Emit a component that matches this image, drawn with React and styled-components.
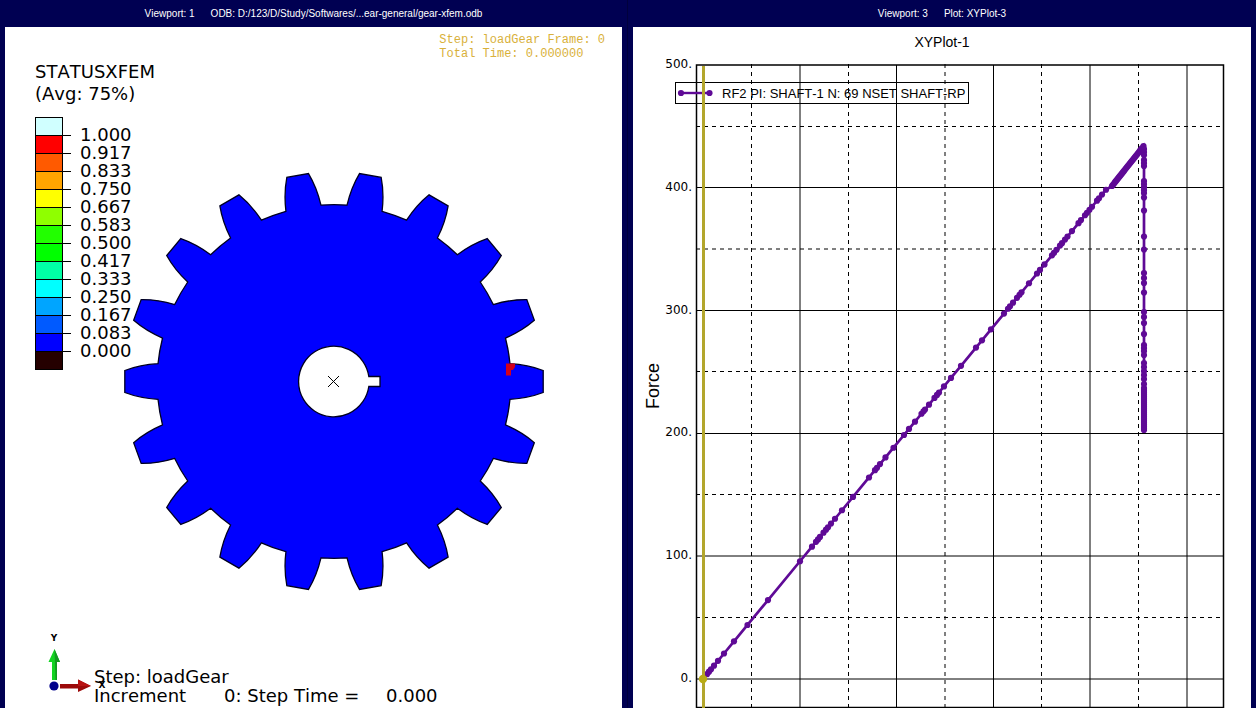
import React from "react"
import styled, { createGlobalStyle } from "styled-components"

const GlobalStyle = createGlobalStyle`
  body {
    margin: 0;
    background: #00003c;
    font-family: "DejaVu Sans", Verdana, sans-serif;
    font-kerning: none;
    color: #000;
  }
`

const Workspace = styled.main`
  display: grid;
  grid-template-columns: 627fr 628fr;
  gap: 1px;
`

const Viewport = styled.section`
  background: #000052;
  padding: 0 5px;
`

const TitleBar = styled.header`
  display: flex;
  justify-content: center;
  align-items: center;
  gap: 16px;
  height: 27px;
  color: #fff;
  font-family: "Liberation Sans", Arial, sans-serif;
  font-size: 10px;
  white-space: nowrap;
`

const Canvas = styled.div`
  display: grid;
  background: #fff;

  > * {
    grid-area: 1 / 1;
  }
`

const Drawing = styled.svg`
  display: block;
  width: 100%;
  height: auto;
`

const Overlay = styled.div`
  display: flex;
  flex-direction: column;
  justify-content: space-between;
  padding-bottom: 3px;
`

const TopRow = styled.div`
  display: flex;
  justify-content: space-between;
  align-items: flex-start;
  padding: 6px 17px 0 30px;
`

const Legend = styled.div`
  display: flex;
  flex-direction: column;
  gap: 12px;
  padding-top: 28px;
  font-size: 18px;
`

const LegendTitle = styled.div`
  line-height: 22px;
`

const Scale = styled.div`
  display: flex;
  align-items: flex-start;
`

const Swatches = styled.div`
  width: 26px;
  border: 1px solid #000;
  border-bottom: 0;
`

const Swatch = styled.div`
  height: 17px;
  background: ${props => props.$color};
  border-bottom: 1px solid #000;
`

const Ticks = styled.div`
  width: 8px;
  padding-top: 1px;
`

const Tick = styled.div`
  height: 17px;
  border-bottom: 1px solid #000;
`

const Values = styled.ul`
  list-style: none;
  margin: 0;
  padding: 9px 0 0 9px;
  line-height: 18px;
`

const FrameInfo = styled.div`
  color: #d9b13b;
  font-family: "Liberation Mono", "Courier New", monospace;
  font-size: 12px;
  line-height: 14px;
`

const StepInfo = styled.div`
  padding-left: 89px;
  font-size: 18px;
  line-height: 19px;
  white-space: nowrap;
`

const IncrementRow = styled.div`
  display: grid;
  grid-template-columns: 130px 162px auto;
`

const PlotText = styled.text`
  font-family: "Liberation Sans", Arial, sans-serif;
  font-size: ${props => props.$size}px;
`

const AxisValue = styled.text`
  font-size: 12px;
  text-anchor: end;
`

const TriadLabel = styled.text`
  font-size: 9px;
  font-weight: bold;
  text-anchor: middle;
`

const colors = [
  "#d0ffff", "#ff0000", "#ff5a00", "#ffa500", "#ffff00", "#8fff00", "#22ff00",
  "#00ff00", "#00ffa5", "#00ffff", "#00a5ff", "#005aff", "#0000ff", "#250000",
]

const values = [
  "1.000", "0.917", "0.833", "0.750", "0.667", "0.583", "0.500",
  "0.417", "0.333", "0.250", "0.167", "0.083", "0.000",
]

const CENTER = { x: 334, y: 381.5 }
const TEETH = 18

// turns a point given in the frame of the right-hand tooth by `angle` degrees
function turn(x, y, angle) {
  const a = (angle * Math.PI) / 180
  const px = CENTER.x + x * Math.cos(a) - y * Math.sin(a)
  const py = CENTER.y + x * Math.sin(a) + y * Math.cos(a)
  return `${px.toFixed(2)} ${py.toFixed(2)}`
}

function gearPath() {
  let d = ""
  for (let i = 0; i < TEETH; i++) {
    const a = (i * 360) / TEETH
    d += i === 0 ? `M${turn(176, -17.8, a)}` : `A177 177 0 0 1 ${turn(176, -17.8, a)}`
    d += `Q${turn(194, -16.8, a)} ${turn(209.2, -11, a)}`
    d += `L${turn(209.2, 11, a)}`
    d += `Q${turn(194, 16.8, a)} ${turn(176, 17.8, a)}`
  }
  return d + `A177 177 0 0 1 ${turn(176, -17.8, 0)}Z`
}

const bore = "M368.8 376.5A35.3 35.3 0 1 0 368.8 386.5H380V376.5Z"

const solidX = [800, 896.5, 993.5, 1090, 1187]
const dashedX = [751.5, 848.5, 945, 1041.5, 1138.5]
const solidY = [187.5, 310.5, 433.5, 556, 679]
const dashedY = [126.5, 249, 371.5, 494.5, 617.5]

const axis = [
  ["500.", 68], ["400.", 191], ["300.", 314], ["200.", 436], ["100.", 559], ["0.", 682],
]

const risingX = [
  703, 707, 709, 711, 714, 718, 724, 734, 747.5, 768, 800, 812, 816, 818, 820, 823.5, 826,
  828, 831, 835, 842, 853, 869, 875, 877, 880, 885.5, 893.5, 904, 909, 915, 921.5, 923.5,
  925, 929, 934.5, 937, 939, 944, 951, 961, 976, 982, 991, 1004, 1008, 1010, 1013, 1017,
  1019.5, 1021.5, 1029, 1037, 1040, 1044.5, 1052, 1054, 1056.5, 1060, 1062, 1065, 1067.5,
  1072, 1078.5, 1081, 1085, 1087, 1089.5, 1092, 1097, 1099, 1102, 1106,
]
const fallingY = [
  149, 152, 155, 160, 163, 166, 181, 184, 187, 190, 193, 197.5, 210.5, 236.5, 249.5, 273,
  278, 283, 292.5, 312, 317, 323, 334, 345, 348, 351, 355, 363, 367, 371, 375, 379, 384,
]

function curve() {
  const points = risingX.map(x => [x, 679 - 1.214 * (x - 703)])
  for (let x = 1112; x <= 1142; x++) {
    points.push([x, 186 - 1.26 * (x - 1112)])
  }
  points.push([1143.5, 146])
  fallingY.forEach(y => points.push([1144, y]))
  for (let y = 388; y <= 430; y += 2) {
    points.push([1144, y])
  }
  return points
}

const points = curve()

function Gear() {
  return (
    <Drawing viewBox="5 27 617 681" role="img" aria-label="STATUSXFEM contour on gear">
      <path d={gearPath()} fill="#0000ff" stroke="#000020" strokeWidth="1.3" />
      <path d={bore} fill="#fff" stroke="#000020" strokeWidth="1.3" />
      <path d="M328 376L339 387M339 376L328 387" stroke="#000" strokeWidth="1" />
      <path d="M506 363.5H515V367L513 370H511V375.5H506Z" fill="#d4001c" />
      <path d="M60 684H78V679.5L91 686L78 692V688.5H60Z" fill="#9c0a0a" />
      <path d="M78 679.5L91 686H78Z" fill="#b81212" />
      <path d="M52 680V662H48.5L54.5 649L60 662H57V680Z" fill="#12d422" />
      <path d="M54.5 649L60 662H57V680H55.5Z" fill="#139a20" />
      <circle cx="54" cy="686" r="4.6" fill="#00008c" />
      <TriadLabel x="54" y="641">Y</TriadLabel>
      <TriadLabel x="102" y="688">X</TriadLabel>
    </Drawing>
  )
}

function Plot() {
  return (
    <Drawing viewBox="633 27 618 681" role="img" aria-label="XYPlot-1">
      <g stroke="#000" strokeWidth="1">
        {solidX.map(x => <line key={x} x1={x} x2={x} y1="65" y2="707" />)}
        {solidY.map(y => <line key={y} x1="697" x2="1223" y1={y} y2={y} />)}
        {dashedX.map(x => <line key={x} x1={x} x2={x} y1="64" y2="707" strokeDasharray="4 4" />)}
        {dashedY.map(y => <line key={y} x1="696" x2="1223" y1={y} y2={y} strokeDasharray="4 4" />)}
      </g>
      <rect x="696.5" y="65" width="527" height="642.5" fill="none" stroke="#000" strokeWidth="1.5" />

      <PlotText $size={14} x="942" y="47" textAnchor="middle">XYPlot-1</PlotText>
      <PlotText $size={18} textAnchor="middle" transform="translate(659 386) rotate(-90)">Force</PlotText>
      {axis.map(([label, y]) => <AxisValue key={label} x="692" y={y}>{label}</AxisValue>)}

      <rect x="675.5" y="82.5" width="293" height="21" fill="none" stroke="#000" />
      <PlotText $size={13} x="722" y="98">RF2 PI: SHAFT-1 N: 69 NSET SHAFT-RP</PlotText>

      <g fill="#5f0a96">
        <line x1="681" x2="710" y1="93" y2="93" stroke="#5f0a96" strokeWidth="2.4" />
        <circle cx="681" cy="93" r="3.1" />
        <circle cx="709.5" cy="93" r="3.1" />
        <polyline points={points.map(p => p.join(",")).join(" ")} fill="none" stroke="#5f0a96" strokeWidth="2.7" />
        {points.map(([x, y], index) => <circle key={index} cx={x} cy={y} r="3.1" />)}
      </g>

      <line x1="703.5" x2="703.5" y1="66" y2="708" stroke="#b3a62c" strokeWidth="3" />
      <circle cx="703" cy="679" r="4.2" fill="#b8ab14" />
    </Drawing>
  )
}

export default function App() {
  return (
    <>
      <GlobalStyle />
      <Workspace>
        <Viewport>
          <TitleBar>
            <span>Viewport: 1</span>
            <span>ODB: D:/123/D/Study/Softwares/...ear-general/gear-xfem.odb</span>
          </TitleBar>
          <Canvas>
            <Gear />
            <Overlay>
              <TopRow>
                <Legend>
                  <LegendTitle>
                    STATUSXFEM<br />
                    (Avg: 75%)
                  </LegendTitle>
                  <Scale>
                    <Swatches>
                      {colors.map(color => <Swatch key={color} $color={color} />)}
                    </Swatches>
                    <Ticks>
                      {values.map(value => <Tick key={value} />)}
                    </Ticks>
                    <Values>
                      {values.map(value => <li key={value}>{value}</li>)}
                    </Values>
                  </Scale>
                </Legend>
                <FrameInfo>
                  Step: loadGear Frame: 0<br />
                  Total Time: 0.000000
                </FrameInfo>
              </TopRow>
              <StepInfo>
                <div>Step: loadGear</div>
                <IncrementRow>
                  <span>Increment</span>
                  <span>0: Step Time =</span>
                  <span>0.000</span>
                </IncrementRow>
              </StepInfo>
            </Overlay>
          </Canvas>
        </Viewport>
        <Viewport>
          <TitleBar>
            <span>Viewport: 3</span>
            <span>Plot: XYPlot-3</span>
          </TitleBar>
          <Canvas>
            <Plot />
          </Canvas>
        </Viewport>
      </Workspace>
    </>
  )
}
